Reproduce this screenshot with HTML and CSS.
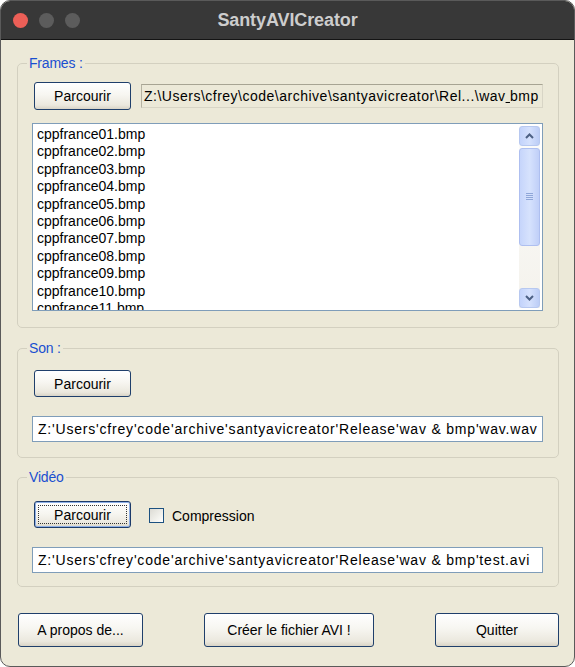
FILE: index.html
```html
<!DOCTYPE html>
<html lang="fr">
<head>
<meta charset="utf-8">
<title>SantyAVICreator</title>
<link rel="stylesheet" href="styles.css">
</head>
<body>
<div class="window">
  <header class="titlebar">
    <div class="lights">
      <span class="light red"></span>
      <span class="light"></span>
      <span class="light"></span>
    </div>
    <div class="title">SantyAVICreator</div>
    <div></div>
  </header>
  <main class="content">
    <section class="group group-frames">
      <span class="legend">Frames :</span>
      <div class="row">
        <button class="btn btn-browse">Parcourir</button>
        <div class="field field-ro">Z:\Users\cfrey\code\archive\santyavicreator\Rel...\wav<u> </u>bmp</div>
      </div>
      <div class="listbox">
        <ul class="items">
          <li>cppfrance01.bmp</li>
          <li>cppfrance02.bmp</li>
          <li>cppfrance03.bmp</li>
          <li>cppfrance04.bmp</li>
          <li>cppfrance05.bmp</li>
          <li>cppfrance06.bmp</li>
          <li>cppfrance07.bmp</li>
          <li>cppfrance08.bmp</li>
          <li>cppfrance09.bmp</li>
          <li>cppfrance10.bmp</li>
          <li>cppfrance11.bmp</li>
        </ul>
        <div class="scrollbar">
          <div class="sb-btn">
            <svg width="9" height="6" viewBox="0 0 9 6"><path d="M1 5 L4.5 1.5 L8 5" fill="none" stroke="#4d6185" stroke-width="2"/></svg>
          </div>
          <div class="sb-thumb">
            <svg width="7" height="8" viewBox="0 0 7 8"><path d="M0 0.5H7M0 2.5H7M0 4.5H7M0 6.5H7" stroke="#8fa6d8" stroke-width="1"/></svg>
          </div>
          <div class="sb-track"></div>
          <div class="sb-btn">
            <svg width="9" height="6" viewBox="0 0 9 6"><path d="M1 1 L4.5 4.5 L8 1" fill="none" stroke="#4d6185" stroke-width="2"/></svg>
          </div>
        </div>
      </div>
    </section>

    <section class="group group-son">
      <span class="legend">Son :</span>
      <div class="row">
        <button class="btn btn-browse">Parcourir</button>
      </div>
      <div class="field field-edit">Z:'Users'cfrey'code'archive'santyavicreator'Release'wav &amp; bmp'wav.wav</div>
    </section>

    <section class="group group-video">
      <span class="legend">Vidéo</span>
      <div class="row row-video">
        <button class="btn btn-browse btn-focus"><span class="focus-rect">Parcourir</span></button>
        <label class="check"><span class="box"></span>Compression</label>
      </div>
      <div class="field field-edit">Z:'Users'cfrey'code'archive'santyavicreator'Release'wav &amp; bmp'test.avi</div>
    </section>

    <footer class="actions">
      <button class="btn btn-action btn-about">A propos de...</button>
      <button class="btn btn-action btn-create">Créer le fichier AVI !</button>
      <button class="btn btn-action btn-quit">Quitter</button>
    </footer>
  </main>
</div>
</body>
</html>
```

FILE: styles.css
```css
* { box-sizing: border-box; }

html, body {
  margin: 0;
  padding: 0;
  background: #ffffff;
}

body {
  font-family: "Liberation Sans", Arial, sans-serif;
  font-size: 14px;
  color: #000;
}

.window {
  width: 575px;
  height: 667px;
  border: 1px solid #5a5a5a;
  border-radius: 10px;
  overflow: hidden;
  background: #ece9d8;
  display: flex;
  flex-direction: column;
}

.titlebar {
  height: 39px;
  flex: none;
  background: #383838;
  border-bottom: 1px solid #141414;
  display: grid;
  grid-template-columns: 1fr auto 1fr;
  align-items: center;
}

.lights {
  display: flex;
  gap: 11px;
  padding-left: 12px;
}

.light {
  width: 15px;
  height: 15px;
  border-radius: 50%;
  background: #5c5c5c;
}

.light.red { background: #ec5f57; }

.title {
  font-family: "Liberation Sans", Arial, sans-serif;
  font-weight: bold;
  font-size: 18px;
  color: #cdcdcd;
  letter-spacing: -0.1px;
}

.content {
  flex: 1;
  padding: 23px 15px 0 16px;
  display: flex;
  flex-direction: column;
}

.group {
  position: relative;
  border: 1px solid #d3d0c0;
  border-radius: 5px;
  padding: 0 15px 0 14px;
  display: flex;
  flex-direction: column;
}

.legend {
  position: absolute;
  top: -9px;
  left: 9px;
  padding: 0 2px;
  background: #ece9d8;
  color: #1a4fd0;
  font-size: 14px;
  line-height: 16px;
  letter-spacing: -0.2px;
}

.group-frames {
  height: 265px;
  padding-top: 18px;
}

.group-son {
  height: 110px;
  margin-top: 20px;
  padding-top: 21px;
}

.group-video {
  height: 110px;
  margin-top: 19px;
  padding-top: 23px;
}

.row {
  display: flex;
  align-items: center;
  padding-left: 2px;
}

.btn {
  font-family: "Liberation Sans", Arial, sans-serif;
  font-size: 14px;
  color: #000;
  border: 1px solid #1f3f6b;
  border-radius: 3px;
  background: linear-gradient(#ffffff 0%, #f7f6f1 45%, #ebe8de 85%, #d9d4c7 100%);
  padding: 0;
  cursor: default;
}

.btn-browse {
  width: 97px;
  height: 28px;
  flex: none;
}

.group-son .btn-browse,
.group-video .btn-browse {
  height: 27px;
}

.btn-focus {
  border: 1px solid #1c3a69;
  box-shadow: inset 0 0 0 1px #8fb0e6;
  padding: 3px;
}

.focus-rect {
  display: flex;
  align-items: center;
  justify-content: center;
  height: 100%;
  border: 1px dotted #333;
}

.field {
  height: 26px;
  line-height: 24px;
  padding: 0 5px;
  white-space: nowrap;
  overflow: hidden;
}

.field-ro {
  flex: 1;
  height: 24px;
  line-height: 22px;
  margin-left: 10px;
  padding: 0 2px;
  background: #ece9d8;
  border: 1px solid #d8d5c6;
  border-top-color: #a7a493;
  border-left-color: #b5b2a2;
  letter-spacing: 0.5px;
}

.field-ro u {
  text-decoration-thickness: 1px;
}

.field-edit {
  margin-top: 19px;
  background: #fff;
  border: 1px solid #7f9db9;
  letter-spacing: 0.8px;
}

.listbox {
  margin-top: 13px;
  height: 188px;
  background: #fff;
  border: 1px solid #7f9db9;
  display: flex;
  overflow: hidden;
}

.items {
  list-style: none;
  margin: 0;
  padding: 2px 0 0 4px;
  flex: 1;
  line-height: 17.4px;
  overflow: hidden;
}

.scrollbar {
  width: 21px;
  margin: 2px 2px 2px 0;
  display: flex;
  flex-direction: column;
  background: linear-gradient(#fcfcfb, #f4f2ec);
}

.sb-btn {
  height: 20px;
  flex: none;
  border: 1px solid #b7c8f0;
  border-radius: 3px;
  background: linear-gradient(90deg, #c3d3fb, #d5e1fd 50%, #bccdf6);
  display: flex;
  align-items: center;
  justify-content: center;
}

.sb-thumb {
  margin-top: 2px;
  height: 98px;
  flex: none;
  border: 1px solid #aebff0;
  border-radius: 3px;
  background: linear-gradient(90deg, #c6d5fb, #d6e2fd 50%, #c0cff8);
  display: flex;
  align-items: center;
  justify-content: center;
}

.sb-track {
  flex: 1;
}

.row-video {
  gap: 18px;
}

.check {
  display: flex;
  align-items: center;
  gap: 8px;
  margin-top: 2px;
}

.box {
  width: 15px;
  height: 15px;
  border: 1px solid #1c5180;
  background: linear-gradient(135deg, #dcdbd4, #f4f4f0 70%, #ffffff);
}

.actions {
  margin-top: 26px;
  display: flex;
  justify-content: space-between;
  padding: 0 0 0 1px;
}

.btn-action {
  height: 34px;
}

.btn-about { width: 125px; }
.btn-create { width: 170px; }
.btn-quit { width: 124px; }
```
